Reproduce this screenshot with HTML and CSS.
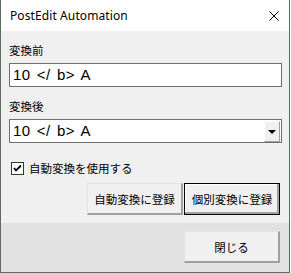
FILE: index.html
```html
<!DOCTYPE html>
<html lang="ja">
<head>
    <meta charset="UTF-8">
    <title>PostEdit Automation</title>
    <link rel="stylesheet" href="styles.css">
</head>
<body>
    <div class="window">
        <div class="titlebar">
            <span class="title">PostEdit Automation</span>
            <svg class="close" width="10" height="10" viewBox="0 0 10 10">
                <path d="M0.5 0.5 L9.5 9.5 M9.5 0.5 L0.5 9.5" stroke="#000" stroke-width="1" fill="none"/>
            </svg>
        </div>
        <div class="content">
            <label class="field-label">変換前</label>
            <div class="textbox">10 &lt;/ b&gt; A</div>

            <label class="field-label">変換後</label>
            <div class="combo">
                <span class="combo-text">10 &lt;/ b&gt; A</span>
                <span class="combo-btn"><span class="arrow"></span></span>
            </div>

            <div class="check-row">
                <span class="checkbox">
                    <svg width="9" height="9" viewBox="0 0 9 9">
                        <path d="M1 4 L3 6.5 L8 1.5" stroke="#000" stroke-width="1.8" fill="none"/>
                    </svg>
                </span>
                <span class="check-label">自動変換を使用する</span>
            </div>

            <div class="button-row">
                <button class="btn">自動変換に登録</button>
                <button class="btn default">個別変換に登録</button>
            </div>
        </div>
        <div class="footer">
            <button class="btn">閉じる</button>
        </div>
    </div>
</body>
</html>
```

FILE: styles.css
```css
body {
    margin: 0;
    padding: 0;
    background-color: #ffffff;
    font-family: "Noto Sans CJK JP", "Noto Sans", sans-serif;
}

.window {
    width: 288px;
    height: 272px;
    border-left: 1px solid #5f6b6b;
    border-right: 1px solid #5f6b6b;
    border-bottom: 1px solid #5f6b6b;
    background-color: #f0f0f0;
    display: flex;
    flex-direction: column;
}

.titlebar {
    height: 31px;
    background-color: #ffffff;
    display: flex;
    align-items: center;
    justify-content: space-between;
    padding: 0 10px 0 9px;
}

.title {
    font-family: "Noto Sans", sans-serif;
    font-size: 12px;
    color: #000;
    letter-spacing: 0.1px;
}

.content {
    padding: 8px 8px 0 8px;
    display: flex;
    flex-direction: column;
    height: 184px;
}

.field-label {
    font-size: 11.5px;
    line-height: 16px;
    height: 16px;
    margin-top: 3px;
    margin-bottom: 5px;
    color: #000;
}

.textbox,
.combo {
    height: 22px;
    border: 1px solid #6e6e6e;
    background-color: #ffffff;
    font-family: "Liberation Sans", Arial, sans-serif;
    font-size: 15px;
    letter-spacing: 0.5px;
    word-spacing: 1.5px;
    line-height: 22px;
    padding-left: 3px;
    box-sizing: content-box;
    color: #000;
}

.textbox {
    width: 268px;
    margin-bottom: 8px;
}

.combo {
    display: flex;
    width: 267px;
    padding-right: 1px;
}

.combo-text {
    flex: 1;
}

.combo-btn {
    width: 14px;
    height: 19px;
    margin-top: 1px;
    border-top: 1px solid #ffffff;
    border-left: 1px solid #ffffff;
    border-right: 1px solid #a0a0a0;
    border-bottom: 1px solid #a0a0a0;
    background-color: #f0f0f0;
    display: flex;
    align-items: center;
    justify-content: center;
}

.arrow {
    width: 0;
    height: 0;
    border-left: 4px solid transparent;
    border-right: 4px solid transparent;
    border-top: 4px solid #000;
}

.check-row {
    display: flex;
    align-items: center;
    margin-top: 17px;
    height: 16px;
}

.checkbox {
    width: 11px;
    height: 11px;
    border: 1px solid #333;
    background-color: #ffffff;
    margin-left: 2px;
    margin-right: 5px;
    display: flex;
    align-items: center;
    justify-content: center;
}

.check-label {
    font-size: 11.5px;
    line-height: 16px;
}

.button-row {
    display: flex;
    justify-content: flex-end;
    gap: 1px;
    margin-top: 7px;
    padding-right: 1px;
}

.btn {
    width: 96px;
    height: 32px;
    background-color: #f0f0f0;
    border-top: 1px solid #e3e3e3;
    border-left: 1px solid #e3e3e3;
    border-right: 2px solid #a0a0a0;
    border-bottom: 2px solid #a0a0a0;
    font-family: "Noto Sans CJK JP", sans-serif;
    font-size: 11.5px;
    color: #000;
    padding: 0;
}

.btn.default {
    border: 1px solid #000;
    box-shadow: inset -2px -2px 0 #a0a0a0, inset 1px 1px 0 #ffffff;
}

.footer {
    flex: 1;
    background-color: #e1e1e1;
    display: flex;
    justify-content: flex-end;
    align-items: flex-start;
    padding: 8px 9px 0 0;
}
```
